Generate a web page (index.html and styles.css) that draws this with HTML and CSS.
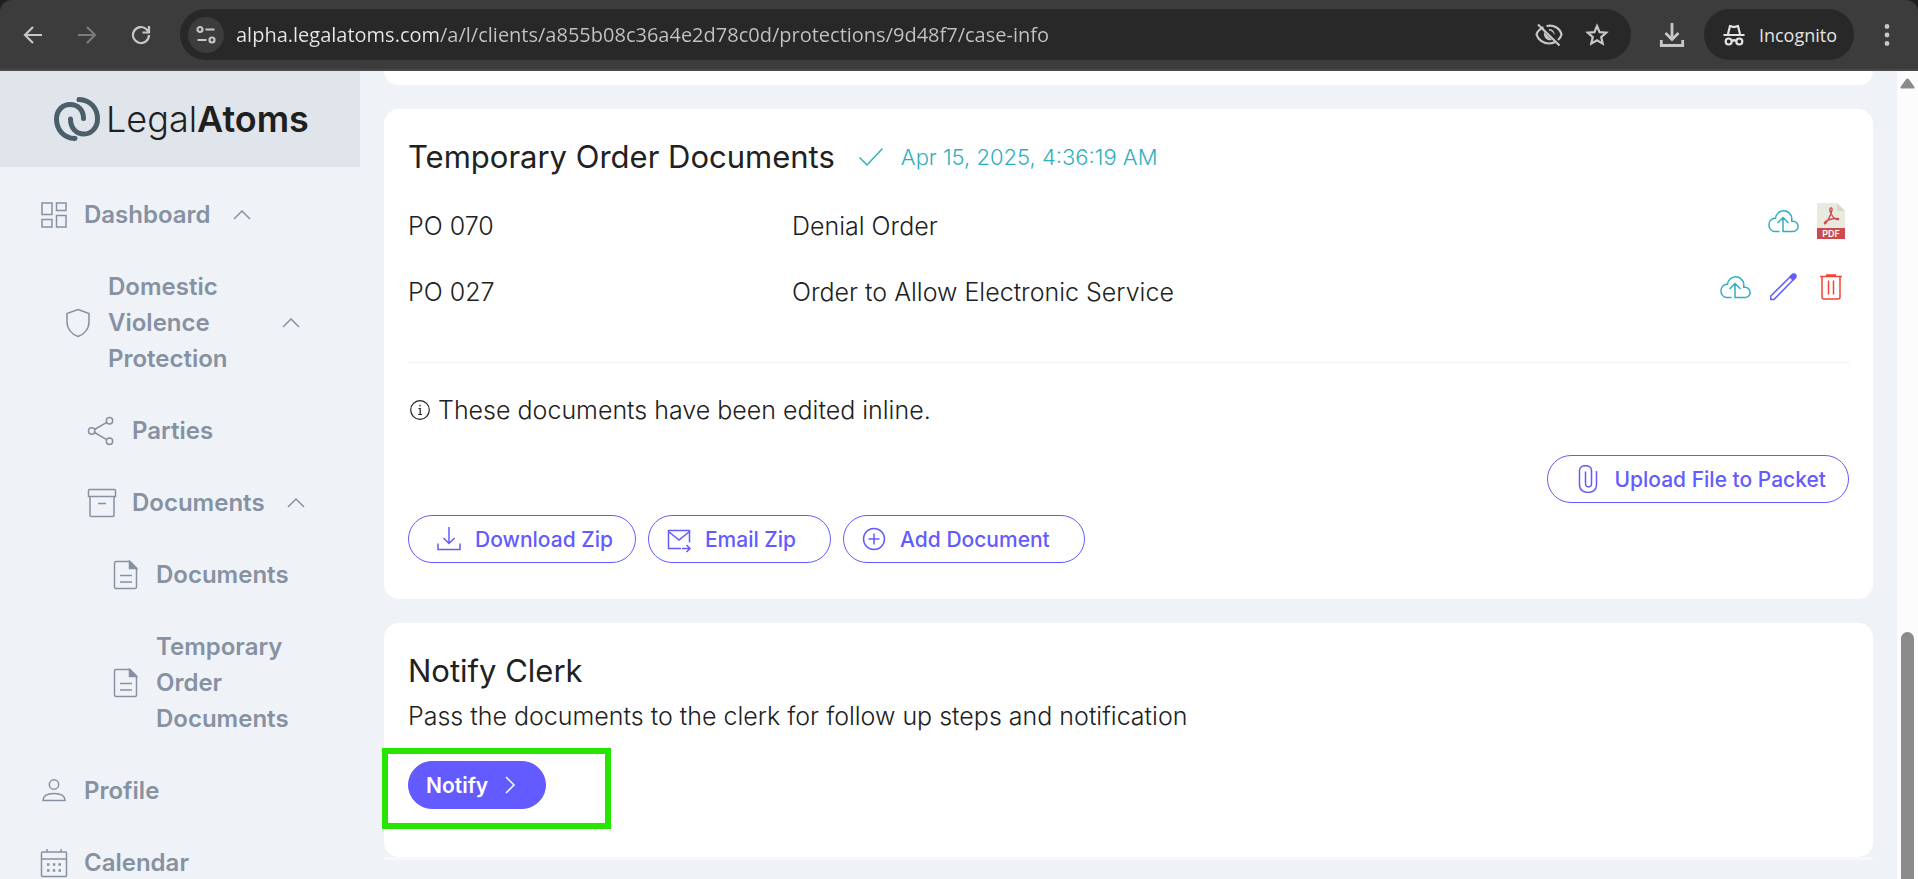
FILE: index.html
```html
<!DOCTYPE html>
<html lang="en">
<head>
    <meta charset="UTF-8">
    <meta name="viewport" content="width=device-width, initial-scale=1.0">
    <link rel="stylesheet" href="styles.css">
    <title>LegalAtoms - Case Info</title>
</head>
<body>

    <!-- Shared icons -->
    <svg class="sprite" aria-hidden="true">
        <symbol id="chevron-up" viewBox="0 0 26 26"><path d="M5 17 L13 9 L21 17"/></symbol>
        <symbol id="file" viewBox="0 0 30 30">
            <path d="M5 1.5 H19 L25.5 8 V27 Q25.5 28.5 24 28.5 H5 Q3.5 28.5 3.5 27 V3 Q3.5 1.5 5 1.5 Z M9 15.5 H21 M9 22 H21"/>
            <path d="M18.5 1.5 L25.5 8.5 H18.5 Z" fill="currentColor"/>
        </symbol>
        <symbol id="cloud" viewBox="0 0 36 36">
            <path d="M14.500 28.500 H9.500 A6.700 6.700 0 0 1 9.500 15.300 H10.500 A8.200 8.200 0 0 1 26.800 15 V18.300 H28 A5 5 0 0 1 28 28.500 H18 V15.500 M12.500 20 L18 14.500 L23.500 20"/>
        </symbol>
    </svg>

    <header class="browser-bar">
        <nav class="browser-nav">
            <button aria-label="Back"><svg width="20" height="20" viewBox="0 0 20 20"><path d="M19 10 H2.500 M10 2 L2 10 L10 18"/></svg></button>
            <button class="disabled" aria-label="Forward"><svg width="20" height="20" viewBox="0 0 20 20"><path d="M1 10 H17.500 M10 2 L18 10 L10 18"/></svg></button>
            <button aria-label="Reload"><svg width="20" height="20" viewBox="0 0 20 20"><path d="M18 10 A8 8 0 1 1 15.500 4.200 L17.500 6.500 M18 1 V7.500 H11.500"/></svg></button>
        </nav>
        <div class="address">
            <button class="site-info" aria-label="View site information">
                <svg width="20" height="20" viewBox="0 0 20 20"><circle cx="4" cy="4.500" r="2.500"/><circle cx="16" cy="15" r="2.500"/><path d="M9.500 4.500 H18.500 M1.500 15 H10.500"/></svg>
            </button>
            <input type="text" class="url" aria-label="Address" value="alpha.legalatoms.com/a/l/clients/a855b08c36a4e2d78c0d/protections/9d48f7/case-info">
            <button aria-label="Third-party cookies blocked">
                <svg width="28" height="24" viewBox="0 0 28 24"><path d="M8.500 4.200 C4.500 6 2.200 9 1.500 11.500 C3 16.500 8 20.500 14 20.500 C16 20.500 18 20.100 19.700 19.300 M11.500 3 C18.500 1.300 25 5 26.500 11.500 C26 13.500 24.700 15.500 23 17 M3 1.500 L24.500 22.500"/><path d="M9 9 L17 17 C13 18.500 8 15 9 9 Z M14 6 C18 6 20 9 19.500 12.500 C18.500 9.500 17 8 14 7.500 Z" fill="currentColor" stroke="none"/></svg>
            </button>
            <button aria-label="Bookmark this tab">
                <svg width="24" height="24" viewBox="0 0 24 24"><path d="M12 3 L14.600 9.100 L21.200 9.700 L16.200 14.100 L17.700 20.600 L12 17.200 L6.300 20.600 L7.800 14.100 L2.800 9.700 L9.400 9.100 Z"/></svg>
            </button>
        </div>
        <button class="downloads" aria-label="Downloads">
            <svg width="26" height="26" viewBox="0 0 26 26"><path d="M13 1 V17 M6.500 11 L13 17.500 L19.500 11 M2.300 18 V23.500 H23.700 V18" stroke-width="2.800"/></svg>
        </button>
        <button class="incognito">
            <svg width="22" height="22" viewBox="0 0 22 22"><path d="M0.500 11 H21.500 M5 10 L7 2 L11 3 L15 2 L17 10 M9 17 Q11 15.500 13 17"/><circle cx="5.700" cy="17.500" r="3"/><circle cx="16.300" cy="17.500" r="3"/></svg>
            Incognito
        </button>
        <button class="more" aria-label="More">
            <svg width="6" height="24" viewBox="0 0 6 24"><circle cx="3" cy="3.500" r="2.400"/><circle cx="3" cy="12" r="2.400"/><circle cx="3" cy="20.500" r="2.400"/></svg>
        </button>
    </header>

    <div class="app">
        <aside class="sidebar">
            <a href="#" class="logo">
                <svg width="46" height="46" viewBox="0 0 46 46"><path d="M25 3.500 C37 4 43.500 13 43.500 23 C43.500 32 37 38 30 38 C22 38 16.500 32 16.500 23 M21 42.500 C9 42 2.500 33 2.500 23 C2.500 14 9 8.500 16 8.500 C24 8.500 29.500 14 29.500 22.500"/></svg>
                <span>Legal<b>Atoms</b></span>
            </a>
            <nav class="menu">
                <a href="#" class="menu-item">
                    <svg class="icon" viewBox="0 0 30 30"><path d="M3 3 H13 V14.500 H3 Z M17.500 3 H27 V10.500 H17.500 Z M3 19.500 H13 V27 H3 Z M17.500 15.500 H27 V27 H17.500 Z"/></svg>
                    <span>Dashboard</span>
                    <svg class="chevron"><use href="#chevron-up"/></svg>
                </a>
                <a href="#" class="menu-item level-2">
                    <svg class="icon" viewBox="0 0 30 30"><path d="M15 1.500 L26 5.500 V14 C26 21 21 26.500 15 28.500 C9 26.500 4 21 4 14 V5.500 Z"/></svg>
                    <span>Domestic Violence Protection</span>
                    <svg class="chevron"><use href="#chevron-up"/></svg>
                </a>
                <a href="#" class="menu-item level-3">
                    <svg class="icon" viewBox="0 0 30 30"><circle cx="4.700" cy="15" r="3.200"/><circle cx="22.500" cy="4.700" r="3.200"/><circle cx="22.500" cy="25.300" r="3.200"/><path d="M7.500 13.500 L19.700 6.300 M7.500 16.500 L19.700 23.700"/></svg>
                    <span>Parties</span>
                </a>
                <a href="#" class="menu-item level-3">
                    <svg class="icon" viewBox="0 0 30 30"><path d="M2.500 1.500 H27.500 Q28.500 1.500 28.500 2.500 V8.500 H1.500 V2.500 Q1.500 1.500 2.500 1.500 Z M3 8.500 V27.500 Q3 28.500 4 28.500 H26 Q27 28.500 27 27.500 V8.500 M11 15.500 H19"/></svg>
                    <span>Documents</span>
                    <svg class="chevron"><use href="#chevron-up"/></svg>
                </a>
                <a href="#" class="menu-item level-4">
                    <svg class="icon"><use href="#file"/></svg>
                    <span>Documents</span>
                </a>
                <a href="#" class="menu-item level-4">
                    <svg class="icon"><use href="#file"/></svg>
                    <span>Temporary Order Documents</span>
                </a>
                <a href="#" class="menu-item">
                    <svg class="icon" viewBox="0 0 30 30"><circle cx="15" cy="8.500" r="4.700"/><path d="M4 24.500 C4 19 8 17.500 15 17.500 C22 17.500 26 19 26 24.500 Z"/></svg>
                    <span>Profile</span>
                </a>
                <a href="#" class="menu-item">
                    <svg class="icon" viewBox="0 0 30 30"><path d="M3.500 4 H26.500 Q27.500 4 27.500 5 V27.500 Q27.500 28.500 26.500 28.500 H3.500 Q2.500 28.500 2.500 27.500 V5 Q2.500 4 3.500 4 Z M2.500 11 H27.500 M8 1 V4 M22 1 V4"/><path d="M8 16.500 h2.500 M13.800 16.500 h2.500 M19.500 16.500 h2.500 M8 22.500 h2.500 M13.800 22.500 h2.500 M19.500 22.500 h2.500" stroke-width="2.500"/></svg>
                    <span>Calendar</span>
                </a>
            </nav>
        </aside>

        <main class="content">
            <section class="card card-previous"></section>

            <section class="card">
                <div class="card-header">
                    <h2>Temporary Order Documents</h2>
                    <svg width="28" height="28" viewBox="0 0 28 28"><path d="M2.500 14.500 L10 22 L25.500 5.500"/></svg>
                    <time datetime="2025-04-15T04:36:19">Apr 15, 2025, 4:36:19 AM</time>
                </div>
                <table class="documents">
                    <tbody>
                        <tr>
                            <td class="code">PO 070</td>
                            <td>Denial Order</td>
                            <td class="actions">
                                <div>
                                    <button class="teal" aria-label="Upload"><svg><use href="#cloud"/></svg></button>
                                    <button aria-label="View PDF">
                                        <svg class="pdf" viewBox="0 0 36 36"><path d="M4 0 H24 L32 8 V25 H4 Z" fill="#e9e9e0"/><path d="M24 0 L32 8 H24 Z" fill="#d9d7ca"/><path d="M4 25 H32 V36 H4 Z" fill="#cc4b4c"/><path d="M17.500 5 C20.500 4 18.500 10 16.500 14 C14.500 18 12 22 11.500 20.500 C11 18.500 16 16.500 20 15.700 C24 15 26.500 15.500 25.500 16.500 C24 17.500 20.500 15 18.800 12 C17 9 16.500 6 17.500 5 Z" fill="none" stroke="#cc4b4c" stroke-width="1.400"/><text x="18" y="33.500">PDF</text></svg>
                                    </button>
                                </div>
                            </td>
                        </tr>
                        <tr>
                            <td class="code">PO 027</td>
                            <td>Order to Allow Electronic Service</td>
                            <td class="actions">
                                <div>
                                    <button class="teal" aria-label="Upload"><svg><use href="#cloud"/></svg></button>
                                    <button class="purple" aria-label="Edit">
                                        <svg viewBox="0 0 36 36"><path d="M5.800 30.500 V27 L27 6 L30 9 L9 30.500 Z"/><path d="M25 8 L28 5 Q31.500 4.500 31 8 L28 11 Z" fill="currentColor"/></svg>
                                    </button>
                                    <button class="red" aria-label="Delete">
                                        <svg viewBox="0 0 36 36"><path d="M7 7.500 H29 M13 6 H23 M9 7.500 V28 Q9 30 11 30 H25 Q27 30 27 28 V7.500 M15.500 11.500 V25.500 M20.500 11.500 V25.500"/></svg>
                                    </button>
                                </div>
                            </td>
                        </tr>
                    </tbody>
                </table>
                <hr>
                <p class="note">
                    <svg width="24" height="24" viewBox="0 0 24 24"><circle cx="12" cy="12" r="9.300"/><path d="M10.500 10.500 H12.200 V16.500 M10.300 16.500 H14 M12 6.800 V8.400"/></svg>
                    These documents have been edited inline.
                </p>
                <div class="upload-row">
                    <button class="btn btn-wide">
                        <svg viewBox="0 0 28 28"><path d="M22.500 6 V20 C22.500 30 5.500 30 5.500 20 V5.500 C5.500 -1 17.500 -1 17.500 5.500 V18.500 C17.500 23 11.500 23 11.500 18.500 V6.500"/></svg>
                        Upload File to Packet
                    </button>
                </div>
                <div class="button-row">
                    <button class="btn btn-wide">
                        <svg viewBox="0 0 28 28"><path d="M14 2 V18 M8.500 13 L14 18.500 L19.500 13 M3 18.500 V24.500 H25 V18.500"/></svg>
                        Download Zip
                    </button>
                    <button class="btn">
                        <svg viewBox="0 0 28 28"><path d="M16 23.500 H3.500 V5.500 H24.500 V17.500 M3.500 6.500 L14 15 L24.500 6.500 M17 23.500 H25 M21.500 20 L25 23.500 L21.500 27"/></svg>
                        Email Zip
                    </button>
                    <button class="btn">
                        <svg viewBox="0 0 28 28"><circle cx="14" cy="14" r="10.500"/><path d="M14 8.500 V19.500 M8.500 14 H19.500"/></svg>
                        Add Document
                    </button>
                </div>
            </section>

            <section class="card notify-card">
                <h2>Notify Clerk</h2>
                <p>Pass the documents to the clerk for follow up steps and notification</p>
                <div class="notify-row">
                    <button class="btn btn-primary">
                        Notify
                        <svg viewBox="0 0 28 28"><path d="M10 6 L18 14 L10 22"/></svg>
                    </button>
                    <div class="highlight"></div>
                </div>
            </section>
            <hr>
        </main>

        <!-- Scrollbar -->
        <div class="scrollbar">
            <svg width="15" height="11" viewBox="0 0 15 11"><path d="M7.500 0.500 Q8.500 0.500 9.300 1.800 L14.500 9 Q15 10.500 13.500 10.500 H1.500 Q0 10.500 0.500 9 L5.700 1.800 Q6.500 0.500 7.500 0.500 Z"/></svg>
            <div class="thumb"></div>
        </div>
    </div>

</body>
</html>
```

FILE: styles.css
```css
* {
    box-sizing: border-box;
}

body {
    margin: 0;
    height: 100vh;
    display: flex;
    flex-direction: column;
    overflow: hidden;
    background: #202020;
    color: #212121;
    font-family: Inter, "Liberation Sans", sans-serif;
    font-size: 25px;
    font-weight: 300;
}

svg {
    display: block;
    flex: none;
    fill: none;
    stroke: currentColor;
    stroke-width: 1.5;
}

button {
    display: flex;
    align-items: center;
    justify-content: center;
    margin: 0;
    padding: 0;
    border: none;
    background: none;
    color: inherit;
    font: inherit;
    cursor: pointer;
}

a {
    color: inherit;
    text-decoration: none;
}

h2 {
    margin: 0;
    font-size: 31px;
    font-weight: 400;
    line-height: 48px;
}

p {
    margin: 0;
    line-height: 42px;
}

hr {
    height: 3px;
    margin: 0;
    border: none;
    background: #f8f8f9;
}

.sprite {
    display: none;
}

/* Browser bar */
.browser-bar {
    flex: none;
    display: flex;
    align-items: center;
    height: 71px;
    padding: 0 28px 0 23px;
    border-bottom: 2px solid #4a484a;
    border-radius: 12px 12px 0 0;
    background: #3c3c3c;
    color: #c7c7c7;
    font-family: "Open Sans", "Noto Sans", sans-serif;
    font-weight: 400;
}

.browser-bar svg {
    stroke-width: 2.2;
}

.browser-nav {
    display: flex;
    gap: 34px;
    margin-right: 29px;
}

.browser-nav .disabled {
    color: #7b7b7b;
}

.address {
    flex: 1;
    display: flex;
    align-items: center;
    gap: 22px;
    height: 51px;
    padding: 0 22px 0 8px;
    border-radius: 26px;
    background: #282828;
}

.site-info {
    width: 36px;
    height: 36px;
    margin-right: -10px;
    border-radius: 50%;
    background: #3c3c3c;
}

.url {
    flex: 1;
    min-width: 0;
    padding: 0;
    border: none;
    outline: none;
    /* host is brighter than the path */
    background: linear-gradient(90deg, #e8e8e8 203px, #c4c4c4 203px);
    background-clip: text;
    color: transparent;
    font: inherit;
    font-size: 20px;
}

.downloads {
    margin: 0 19px 0 28px;
}

.incognito {
    gap: 14px;
    height: 51px;
    padding: 0 17px 0 19px;
    border-radius: 26px;
    background: #282828;
    color: #e3e3e3;
    font-size: 18px;
}

.more {
    margin-left: 30px;
}

.more svg {
    stroke: none;
    fill: currentColor;
}

/* Layout */
.app {
    flex: 1;
    min-height: 0;
    display: flex;
    background: #eff3f8;
}

.sidebar {
    flex: none;
    width: 360px;
    overflow: hidden;
}

.logo {
    display: flex;
    align-items: center;
    gap: 6px;
    height: 96px;
    padding-left: 54px;
    background: #e0e4eb;
    color: #1f1f1f;
    font-size: 36px;
}

.logo svg {
    color: #4a5f6a;
    stroke-width: 5;
    stroke-linecap: round;
}

.logo b {
    font-weight: 600;
}

.menu {
    padding-top: 12px;
}

.menu-item {
    display: flex;
    align-items: center;
    padding: 18px 48px 18px 39px;
    color: #8691a2;
    font-size: 24px;
    font-weight: 600;
    line-height: 36px;
}

.menu-item .icon {
    width: 30px;
    height: 30px;
    margin-right: 15px;
}

.menu-item .chevron {
    width: 26px;
    height: 26px;
    margin-left: 18px;
}

.level-2 {
    padding-left: 63px;
    padding-right: 56px;
}

.level-3 {
    padding-left: 87px;
}

.level-4 {
    padding-left: 111px;
}

.content {
    flex: 1;
    min-width: 0;
    padding: 0 24px;
    overflow: hidden;
}

/* Cards */
.card {
    margin-bottom: 24px;
    padding: 24px 24px 36px;
    border-radius: 15px;
    background: #ffffff;
}

.card-previous {
    padding: 14px 0 0;
    border-radius: 0 0 15px 15px;
}

.card-header {
    display: flex;
    align-items: center;
    color: #2fafc0;
    font-size: 22px;
}

.card-header h2 {
    color: #212121;
}

.card-header svg {
    margin: 0 16px 0 22px;
}

.documents {
    width: 100%;
    margin: 11px 0 37px;
    border-collapse: collapse;
    line-height: 64px;
}

.documents td {
    padding: 2px 0 0;
    vertical-align: top;
}

.documents .code {
    width: 384px;
}

.documents .actions {
    padding: 0;
}

.actions div {
    display: flex;
    align-items: center;
    justify-content: flex-end;
    gap: 12px;
    height: 58px;
}

.actions svg {
    width: 36px;
    height: 36px;
}

.actions .pdf {
    stroke: none;
}

.pdf text {
    fill: #ffffff;
    font-size: 9px;
    font-weight: 600;
    text-anchor: middle;
}

.teal {
    color: #2fafc0;
}

.purple {
    color: #635bff;
}

.red {
    color: #f44336;
}

.note {
    display: flex;
    align-items: center;
    gap: 6px;
    margin: 25px 0 24px;
}

.note svg {
    stroke-width: 1.2;
}

/* Buttons */
.btn {
    gap: 12px;
    height: 48px;
    padding: 0 34px 0 16px;
    border: 1px solid #635bff;
    border-radius: 24px;
    color: #635bff;
    font-size: 21px;
    font-weight: 500;
}

.btn svg {
    width: 28px;
    height: 28px;
}

.btn-wide {
    padding: 0 22px 0 26px;
}

.btn-primary {
    gap: 8px;
    padding: 0 21px 0 17px;
    background: #635bff;
    color: #ffffff;
    font-weight: 600;
}

.upload-row {
    display: flex;
    justify-content: flex-end;
    margin-bottom: 12px;
}

.button-row {
    display: flex;
    gap: 12px;
}

.notify-card {
    margin-bottom: 0;
    padding-bottom: 48px;
}

.notify-row {
    position: relative;
    display: flex;
    margin-top: 24px;
}

.highlight {
    position: absolute;
    top: -13px;
    left: -26px;
    width: 229px;
    height: 81px;
    border: 6px solid #26e600;
    pointer-events: none;
}

/* Scrollbar */
.scrollbar {
    flex: none;
    display: flex;
    flex-direction: column;
    align-items: center;
    width: 21px;
    padding-top: 7px;
    background: #fcfcfc;
}

.scrollbar svg {
    fill: #8b8b8b;
    stroke: none;
}

.thumb {
    flex: 1;
    width: 13px;
    margin-top: 543px;
    border-radius: 7px 7px 0 0;
    background: #8b8b8b;
}
```
